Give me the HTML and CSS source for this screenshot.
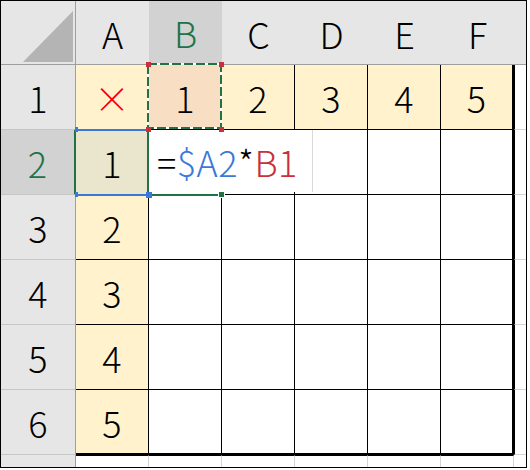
FILE: index.html
```html
<!DOCTYPE html>
<html lang="ja">

<head>
    <meta charset="utf-8">
    <title>九九表</title>
    <link rel="stylesheet" href="styles.css">
</head>

<body>
    <div class="sheet">
        <!-- 列見出し -->
        <div class="corner"><div class="tri"></div></div>
        <div class="col-hd">A</div>
        <div class="col-hd sel">B</div>
        <div class="col-hd">C</div>
        <div class="col-hd">D</div>
        <div class="col-hd">E</div>
        <div class="col-hd">F</div>
        <div class="col-hd g-hd"></div>

        <!-- 1行目 -->
        <div class="row-hd">1</div>
        <div class="cell y times">×</div>
        <div class="cell copied">1
            <svg class="marquee" width="75" height="66" viewBox="0 0 75 66">
                <rect x="1" y="1" width="73" height="64" fill="none" stroke="#fff" stroke-width="2"/>
                <rect x="1" y="1" width="73" height="64" fill="none" stroke="#217346" stroke-width="2" stroke-dasharray="9 3"/>
            </svg>
            <span class="h red tl"></span><span class="h red tr"></span>
            <span class="h red bl"></span><span class="h red br"></span>
        </div>
        <div class="cell y">2</div>
        <div class="cell y">3</div>
        <div class="cell y">4</div>
        <div class="cell y last">5</div>
        <div class="g"></div>

        <!-- 2行目 -->
        <div class="row-hd sel">2</div>
        <div class="cell ref">1
            <span class="ref-box"></span>
            <span class="h blue tl"></span>
            <span class="h blue bl"></span><span class="h blue br"></span>
        </div>
        <div class="cell active">
            <span class="active-box"><span class="fill"></span></span>
            <span class="edit">=<span class="c-blue">$A2</span>*<span class="c-red">B1</span></span>
        </div>
        <div class="cell"></div>
        <div class="cell"></div>
        <div class="cell"></div>
        <div class="cell last"></div>
        <div class="g"></div>

        <!-- 3行目 -->
        <div class="row-hd">3</div>
        <div class="cell y">2</div>
        <div class="cell"></div>
        <div class="cell"></div>
        <div class="cell"></div>
        <div class="cell"></div>
        <div class="cell last"></div>
        <div class="g"></div>

        <!-- 4行目 -->
        <div class="row-hd">4</div>
        <div class="cell y">3</div>
        <div class="cell"></div>
        <div class="cell"></div>
        <div class="cell"></div>
        <div class="cell"></div>
        <div class="cell last"></div>
        <div class="g"></div>

        <!-- 5行目 -->
        <div class="row-hd">5</div>
        <div class="cell y">4</div>
        <div class="cell"></div>
        <div class="cell"></div>
        <div class="cell"></div>
        <div class="cell"></div>
        <div class="cell last"></div>
        <div class="g"></div>

        <!-- 6行目 -->
        <div class="row-hd">6</div>
        <div class="cell y bottom">5</div>
        <div class="cell bottom"></div>
        <div class="cell bottom"></div>
        <div class="cell bottom"></div>
        <div class="cell bottom"></div>
        <div class="cell bottom last"></div>
        <div class="g"></div>

        <!-- 7行目 (見切れ) -->
        <div class="row-hd r7-hd"></div>
        <div class="r7"></div>
        <div class="r7"></div>
        <div class="r7"></div>
        <div class="r7"></div>
        <div class="r7"></div>
        <div class="r7"></div>
        <div class="g7"></div>
    </div>
</body>

</html>
```

FILE: styles.css
```css
body {
    margin: 0;
    background-color: #fff;
}

.sheet {
    display: grid;
    grid-template-columns: 75px repeat(6, 73px) 12px;
    grid-template-rows: 64px repeat(6, 65px) 12px;
    width: 527px;
    height: 468px;
    box-sizing: border-box;
    border: 1px solid #000;
    font-family: "Noto Sans CJK JP", "Noto Sans", sans-serif;
    font-size: 36px;
    font-weight: 300;
    color: #000;
    overflow: hidden;
}

.sheet > div {
    box-sizing: border-box;
    display: flex;
    align-items: center;
    justify-content: center;
    position: relative;
}

/* 左上の三角 */
.corner {
    background-color: #E6E6E6;
    border-right: 1px solid #9E9E9E;
    border-bottom: 1px solid #9E9E9E;
    justify-content: flex-end !important;
    align-items: flex-end !important;
    padding: 0 2px 2px 0;
}

.tri {
    width: 50px;
    height: 51px;
    background-color: #B4B4B4;
    clip-path: polygon(100% 0, 100% 100%, 0 100%);
}

/* 見出し */
.col-hd {
    background-color: #E6E6E6;
    border-bottom: 1px solid #9E9E9E;
}

.col-hd::after {
    content: "";
    position: absolute;
    right: -1px;
    top: 6px;
    bottom: -1px;
    width: 1px;
    background-color: #ABABAB;
}

.col-hd.sel {
    background-color: #D2D2D2;
    color: #217346;
    border-bottom: 2px solid #217346;
}

.g-hd::after {
    display: none;
}

.row-hd {
    background-color: #E6E6E6;
    border-right: 1px solid #9E9E9E;
    border-bottom: 1px solid #C6C6C6;
}

.row-hd.sel {
    background-color: #D2D2D2;
    color: #217346;
    border-right: 2px solid #217346;
}

.r7-hd {
    border-bottom: none;
}

/* セル */
.cell {
    background-color: #fff;
    border-right: 1px solid #000;
    border-bottom: 1px solid #000;
}

.cell.y {
    background-color: #FFF2CC;
}

.cell.last {
    border-right: 2px solid #000;
}

.cell.bottom {
    border-bottom: 2px solid #000;
}

.times {
    color: #FF0000;
}

.copied {
    background-color: #F8DEC2;
}

.ref {
    background-color: #EAE5CD;
}

.g {
    border-left: 1px solid #000;
    border-bottom: 1px solid #D4D4D4;
}

.r7 {
    border-top: 1px solid #000;
    border-right: 1px solid #D4D4D4;
}

/* 参照・選択の枠 */
.marquee {
    position: absolute;
    left: -2px;
    top: -2px;
    z-index: 4;
}

.ref-box {
    position: absolute;
    left: -1px;
    top: -1px;
    width: 74px;
    height: 67px;
    box-sizing: border-box;
    border-top: 2px solid #3C78D8;
    border-bottom: 2px solid #3C78D8;
    z-index: 1;
}

.active-box {
    position: absolute;
    left: -2px;
    top: -1px;
    width: 76px;
    height: 67px;
    box-sizing: border-box;
    border: 2px solid #217346;
    border-top: none;
    z-index: 2;
}

.fill {
    position: absolute;
    right: -4px;
    bottom: -4px;
    width: 5px;
    height: 5px;
    background-color: #217346;
    border: 1px solid #fff;
}

.edit {
    position: absolute;
    left: 0;
    top: 0;
    width: 164px;
    height: 62px;
    box-sizing: border-box;
    padding-left: 8px;
    display: flex;
    align-items: center;
    background-color: #fff;
    border-right: 1px solid #D9D9D9;
    white-space: nowrap;
    letter-spacing: 0.5px;
    z-index: 3;
}

.c-blue {
    color: #3C78D8;
}

.c-red {
    color: #C8303C;
}

.h {
    position: absolute;
    width: 5px;
    height: 5px;
    z-index: 5;
}

.h.red {
    background-color: #C8303C;
}

.h.blue {
    background-color: #3C78D8;
}

.copied .tl { left: -3px; top: -3px; }
.copied .tr { right: -3px; top: -3px; }
.copied .bl { left: -3px; bottom: -3px; }
.copied .br { right: -3px; bottom: -3px; }

.ref .tl { left: -1px; top: -3px; width: 3px; }
.ref .bl { left: -1px; bottom: -3px; width: 3px; }
.ref .br { right: -4px; bottom: -4px; width: 6px; height: 6px; }
```
